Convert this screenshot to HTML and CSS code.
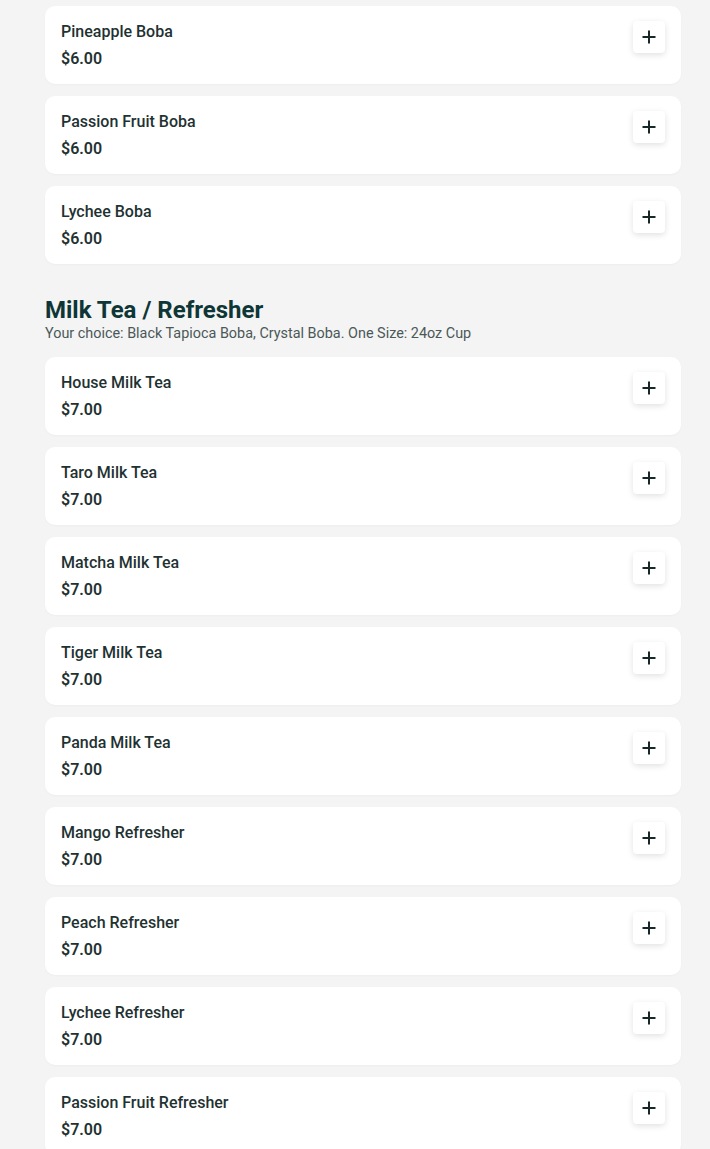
FILE: index.html
```html
<!DOCTYPE html>
<html>
<head>
<meta charset="utf-8">
<link rel="stylesheet" href="styles.css">
</head>
<body>
<main class="menu">
  <section class="section">
    <div class="list">
      <div class="item"><div class="info"><div class="name">Pineapple Boba</div><div class="price">$6.00</div></div><button class="add"><svg viewBox="0 0 16 16" width="16" height="16"><path d="M8 1.5v13M1.5 8h13" stroke="#182828" stroke-width="2" fill="none"/></svg></button></div>
      <div class="item"><div class="info"><div class="name">Passion Fruit Boba</div><div class="price">$6.00</div></div><button class="add"><svg viewBox="0 0 16 16" width="16" height="16"><path d="M8 1.5v13M1.5 8h13" stroke="#182828" stroke-width="2" fill="none"/></svg></button></div>
      <div class="item"><div class="info"><div class="name">Lychee Boba</div><div class="price">$6.00</div></div><button class="add"><svg viewBox="0 0 16 16" width="16" height="16"><path d="M8 1.5v13M1.5 8h13" stroke="#182828" stroke-width="2" fill="none"/></svg></button></div>
    </div>
  </section>
  <section class="section">
    <h2 class="title">Milk Tea / Refresher</h2>
    <p class="desc">Your choice: Black Tapioca Boba, Crystal Boba. One Size: 24oz Cup</p>
    <div class="list">
      <div class="item"><div class="info"><div class="name">House Milk Tea</div><div class="price">$7.00</div></div><button class="add"><svg viewBox="0 0 16 16" width="16" height="16"><path d="M8 1.5v13M1.5 8h13" stroke="#182828" stroke-width="2" fill="none"/></svg></button></div>
      <div class="item"><div class="info"><div class="name">Taro Milk Tea</div><div class="price">$7.00</div></div><button class="add"><svg viewBox="0 0 16 16" width="16" height="16"><path d="M8 1.5v13M1.5 8h13" stroke="#182828" stroke-width="2" fill="none"/></svg></button></div>
      <div class="item"><div class="info"><div class="name">Matcha Milk Tea</div><div class="price">$7.00</div></div><button class="add"><svg viewBox="0 0 16 16" width="16" height="16"><path d="M8 1.5v13M1.5 8h13" stroke="#182828" stroke-width="2" fill="none"/></svg></button></div>
      <div class="item"><div class="info"><div class="name">Tiger Milk Tea</div><div class="price">$7.00</div></div><button class="add"><svg viewBox="0 0 16 16" width="16" height="16"><path d="M8 1.5v13M1.5 8h13" stroke="#182828" stroke-width="2" fill="none"/></svg></button></div>
      <div class="item"><div class="info"><div class="name">Panda Milk Tea</div><div class="price">$7.00</div></div><button class="add"><svg viewBox="0 0 16 16" width="16" height="16"><path d="M8 1.5v13M1.5 8h13" stroke="#182828" stroke-width="2" fill="none"/></svg></button></div>
      <div class="item"><div class="info"><div class="name">Mango Refresher</div><div class="price">$7.00</div></div><button class="add"><svg viewBox="0 0 16 16" width="16" height="16"><path d="M8 1.5v13M1.5 8h13" stroke="#182828" stroke-width="2" fill="none"/></svg></button></div>
      <div class="item"><div class="info"><div class="name">Peach Refresher</div><div class="price">$7.00</div></div><button class="add"><svg viewBox="0 0 16 16" width="16" height="16"><path d="M8 1.5v13M1.5 8h13" stroke="#182828" stroke-width="2" fill="none"/></svg></button></div>
      <div class="item"><div class="info"><div class="name">Lychee Refresher</div><div class="price">$7.00</div></div><button class="add"><svg viewBox="0 0 16 16" width="16" height="16"><path d="M8 1.5v13M1.5 8h13" stroke="#182828" stroke-width="2" fill="none"/></svg></button></div>
      <div class="item"><div class="info"><div class="name">Passion Fruit Refresher</div><div class="price">$7.00</div></div><button class="add"><svg viewBox="0 0 16 16" width="16" height="16"><path d="M8 1.5v13M1.5 8h13" stroke="#182828" stroke-width="2" fill="none"/></svg></button></div>
    </div>
  </section>
</main>
</body>
</html>
```
FILE: styles.css
```css
html, body {
  margin: 0;
  padding: 0;
  background: #f4f4f4;
  font-family: Roboto, "Liberation Sans", sans-serif;
  color: #1d3030;
}
.menu {
  padding: 6px 29px 0 45px;
  display: flex;
  flex-direction: column;
  gap: 32px;
}
.list {
  display: flex;
  flex-direction: column;
  gap: 12px;
}
.item {
  background: #ffffff;
  border-radius: 10px;
  height: 78px;
  box-sizing: border-box;
  padding: 16px 16px 15px 16px;
  display: flex;
  justify-content: space-between;
  align-items: flex-start;
  box-shadow: 0 1px 2px rgba(0,0,0,0.03);
}
.info {
  display: flex;
  flex-direction: column;
  gap: 7px;
}
.name {
  font-size: 16px;
  font-weight: 500;
  line-height: 20px;
  color: #1f3232;
}
.price {
  font-size: 16px;
  font-weight: 600;
  line-height: 20px;
  color: #1f3232;
}
.add {
  width: 32px;
  height: 32px;
  margin-top: -1px;
  border: none;
  border-radius: 4px;
  background: #ffffff;
  box-shadow: 0 2px 6px rgba(0,0,0,0.12);
  display: flex;
  align-items: center;
  justify-content: center;
  padding: 0;
}
.title {
  margin: 0;
  font-size: 24px;
  font-weight: 700;
  line-height: 28px;
  color: #0f3636;
}
.desc {
  margin: 0 0 15px 0;
  font-size: 14.4px;
  line-height: 17px;
  padding-top: 1px;
  color: #4b5858;
}
```
